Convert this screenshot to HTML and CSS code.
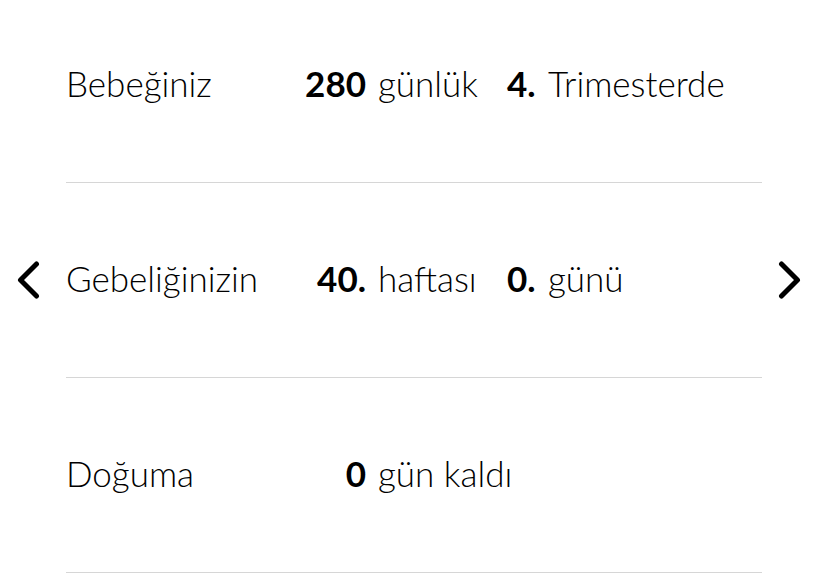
FILE: index.html
```html
<!DOCTYPE html>
<html lang="tr">
<head>
    <meta charset="UTF-8">
    <meta name="viewport" content="width=device-width, initial-scale=1.0">
    <title>Gebelik Takibi</title>
    <link rel="stylesheet" href="styles.css">
</head>
<body>
    <div class="summary">
        <div class="row">
            <span class="label">Bebeğiniz</span>
            <span class="num">280</span>
            <span class="unit">günlük</span>
            <span class="num2">4.</span>
            <span class="unit2">Trimesterde</span>
        </div>

        <button class="nav-btn prev" aria-label="Önceki hafta">
            <svg width="23" height="38" viewBox="0 0 23 38">
                <polyline points="19.5,3 3.5,19 19.5,35" fill="none" stroke="#000" stroke-width="5" stroke-linecap="round" stroke-linejoin="round"/>
            </svg>
        </button>
        <div class="row">
            <span class="label">Gebeliğinizin</span>
            <span class="num">40.</span>
            <span class="unit">haftası</span>
            <span class="num2">0.</span>
            <span class="unit2">günü</span>
        </div>
        <button class="nav-btn next" aria-label="Sonraki hafta">
            <svg width="23" height="38" viewBox="0 0 23 38">
                <polyline points="3.5,3 19.5,19 3.5,35" fill="none" stroke="#000" stroke-width="5" stroke-linecap="round" stroke-linejoin="round"/>
            </svg>
        </button>

        <div class="row">
            <span class="label">Doğuma</span>
            <span class="num">0</span>
            <span class="unit">gün kaldı</span>
        </div>
    </div>
</body>
</html>
```

FILE: styles.css
```css
body {
    margin: 0;
    padding: 0;
    background-color: #ffffff;
    color: #000000;
    font-family: Lato, "Noto Sans", sans-serif;
    font-weight: 300;
    overflow: hidden;
}

.summary {
    display: grid;
    grid-template-columns: 66px 696px 66px;
    margin-top: -12px;
}

.row {
    grid-column: 2;
    box-sizing: border-box;
    height: 195px;
    padding-bottom: 3px;
    border-bottom: 1px solid #d6d6d6;
    display: grid;
    grid-template-columns: 221px 67px 117px 29px auto;
    column-gap: 12px;
    align-items: center;
    font-size: 35px;
    line-height: 1;
}

.num, .num2 {
    font-weight: 700;
    white-space: nowrap;
}

.num {
    text-align: right;
}

.unit, .unit2 {
    white-space: nowrap;
}

.nav-btn {
    grid-row: 2;
    align-self: center;
    justify-self: start;
    background: none;
    border: none;
    padding: 0 0 2px;
    cursor: pointer;
    line-height: 0;
}

.nav-btn.prev {
    grid-column: 1;
    margin-left: 17px;
}

.nav-btn.next {
    grid-column: 3;
    margin-left: 16px;
}
```
